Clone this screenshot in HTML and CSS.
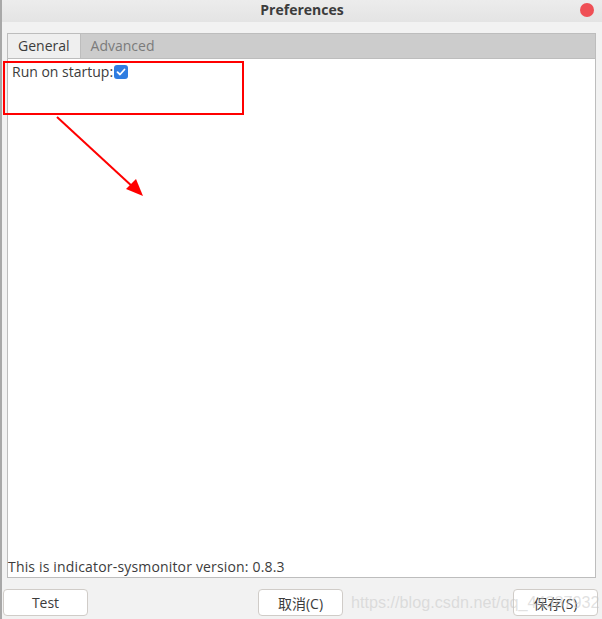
FILE: index.html
```html
<!DOCTYPE html>
<html lang="en">
<head>
  <meta charset="UTF-8" />
  <title>Preferences</title>
  <link rel="stylesheet" href="styles.css">
</head>
<body>

<div class="window">
  <div class="titlebar">
    <span class="title">Preferences</span>
    <span class="close-dot"></span>
  </div>

  <div class="notebook">
    <div class="tabs">
      <div class="tab active">General</div>
      <div class="tab">Advanced</div>
    </div>
    <div class="page">
      <div class="row">
        <span>Run on startup:</span>
        <span class="check">
          <svg width="14" height="14" viewBox="0 0 14 14"><path d="M3.5 7.2 L6 9.5 L10.5 4.5" fill="none" stroke="#fff" stroke-width="1.8" stroke-linecap="round" stroke-linejoin="round"/></svg>
        </span>
      </div>
      <div class="version">This is indicator-sysmonitor version: 0.8.3</div>
    </div>
  </div>

  <div class="actions">
    <button class="btn btn-test">Test</button>
    <div class="right">
      <button class="btn">取消(C)</button>
      <button class="btn">保存(S)</button>
    </div>
  </div>

  <!-- annotation drawn over the screenshot -->
  <svg class="annot" width="602" height="619" viewBox="0 0 602 619">
    <rect x="4" y="62" width="239" height="52" fill="none" stroke="#f00" stroke-width="2"/>
    <line x1="57" y1="117" x2="134" y2="188" stroke="#f00" stroke-width="2"/>
    <polygon points="143,196 126,189 136,179" fill="#f00"/>
  </svg>
  <div class="watermark">https://blog.csdn.net/qq_44387932</div>
</div>

</body>
</html>
```

FILE: styles.css
```css
body {
  margin: 0;
  font-family: "Open Sans", "Noto Sans CJK SC", sans-serif;
  color: #3c3c3c;
}
.window {
  position: relative;
  width: 602px;
  height: 619px;
  box-sizing: border-box;
  background: #f2f2f2;
  border-left: 2px solid #a8a8a8;
  display: flex;
  flex-direction: column;
  overflow: hidden;
}
.titlebar {
  height: 22px;
  box-sizing: border-box;
  padding-bottom: 3px;
  display: flex;
  align-items: center;
  justify-content: center;
  background: linear-gradient(#ececec, #e4e4e4);
  position: relative;
}
.title {
  font-weight: bold;
  font-size: 14px;
  line-height: 16px;
}
.close-dot {
  position: absolute;
  right: 8px;
  top: 3px;
  width: 14px;
  height: 14px;
  border-radius: 50%;
  background: #ef4f55;
}
.notebook {
  margin: 11px 6px 0 5px;
  height: 543px;
  border: 1px solid #bdbdbd;
  display: flex;
  flex-direction: column;
}
.tabs {
  height: 24px;
  display: flex;
  background: #cccccc;
  border-bottom: 1px solid #bdbdbd;
}
.tab {
  padding: 0 10px;
  font-size: 14px;
  line-height: 24px;
  color: #7b7b7b;
}
.tab.active {
  background: #efefef;
  color: #3c3c3c;
  border-right: 1px solid #bdbdbd;
}
.page {
  flex: 1;
  background: #fff;
  display: flex;
  flex-direction: column;
}
.row {
  display: flex;
  align-items: center;
  padding: 3px 0 0 4px;
  font-size: 14px;
}
.check {
  width: 14px;
  height: 14px;
  border-radius: 3px;
  background: #2f7de1;
  display: flex;
  margin-left: 1px;
}
.version {
  margin-top: auto;
  font-size: 14px;
  letter-spacing: 0.17px;
  line-height: 20px;
}
.actions {
  display: flex;
  justify-content: space-between;
  margin: 11px 4px 0 1px;
}
.right {
  display: flex;
  gap: 170px;
}
.btn {
  height: 27px;
  width: 85px;
  background: #fff;
  border: 1px solid #d0ccc8;
  border-radius: 4px;
  font-family: "Open Sans", "Noto Sans CJK SC", sans-serif;
  font-size: 14px;
  color: #3c3c3c;
  padding: 0;
}
.annot {
  position: absolute;
  left: -2px;
  top: 0;
}
.watermark {
  position: absolute;
  left: 349px;
  top: 593px;
  font-family: "Liberation Sans", sans-serif;
  font-size: 16.2px;
  color: rgba(200, 200, 200, 0.55);
  white-space: nowrap;
}
```
